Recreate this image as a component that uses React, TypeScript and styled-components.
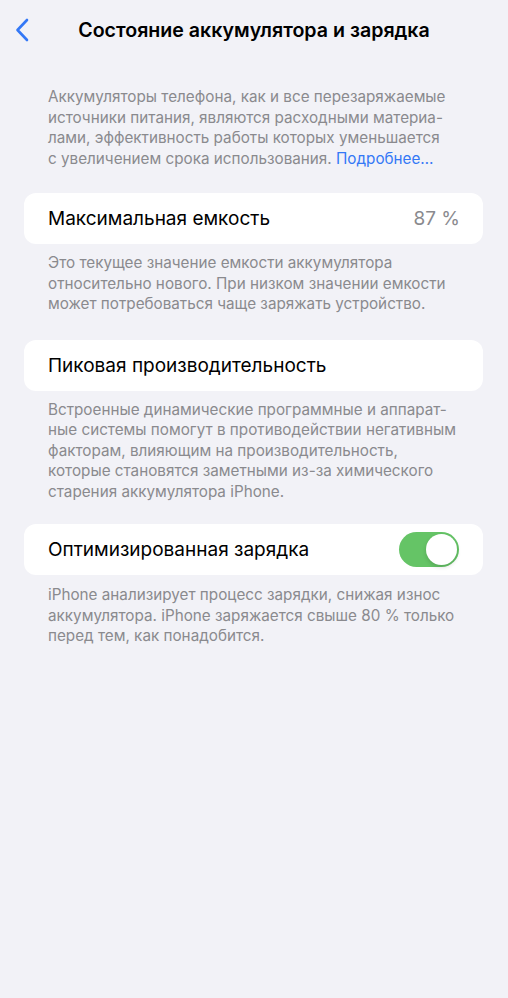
import styled, { createGlobalStyle } from 'styled-components';

const GlobalStyle = createGlobalStyle`
  html, body {
    margin: 0;
    padding: 0;
    background: #f2f2f7;
  }
  body {
    font-family: Inter, "Noto Sans", "Liberation Sans", sans-serif;
    -webkit-font-smoothing: antialiased;
  }
`;

const Screen = styled.div`
  min-height: 998px;
  background: #f2f2f7;
  box-sizing: border-box;
  padding: 0 25px 40px 24px;
`;

const NavBar = styled.div`
  display: grid;
  grid-template-columns: 40px 1fr 40px;
  align-items: center;
  height: 60px;
  margin: 0 -25px 0 -24px;
  padding: 0 8px;
`;

const BackButton = styled.button`
  display: flex;
  align-items: center;
  background: none;
  border: 0;
  padding: 0 0 0 7px;
  height: 40px;
  cursor: pointer;
`;

const Title = styled.h1`
  margin: 0;
  text-align: center;
  font-size: 19.6px;
  font-weight: 600;
  color: #000;
  white-space: nowrap;
`;

const Note = styled.p<{ $top?: number }>`
  margin: ${p => p.$top ?? 9}px 0 0;
  padding: 0 24px;
  font-size: 15.25px;
  line-height: 20.5px;
  color: #8a8a8e;
  white-space: nowrap;
`;

const Link = styled.a`
  color: #3478f6;
  text-decoration: none;
`;

const Card = styled.div<{ $top: number }>`
  display: flex;
  align-items: center;
  justify-content: space-between;
  height: 51px;
  margin-top: ${p => p.$top}px;
  padding: 0 23px 0 24px;
  background: #fff;
  border-radius: 12px;
`;

const Label = styled.span`
  font-size: 19px;
  color: #000;
`;

const Value = styled.span`
  font-size: 19px;
  color: #8a8a8e;
`;

const Toggle = styled.div<{ $on: boolean }>`
  display: flex;
  align-items: center;
  justify-content: ${p => (p.$on ? 'flex-end' : 'flex-start')};
  width: 60px;
  height: 35px;
  margin-right: 1px;
  padding: 2px;
  box-sizing: border-box;
  border-radius: 18px;
  background: ${p => (p.$on ? '#65c466' : '#e9e9ea')};
`;

const Knob = styled.div`
  width: 31px;
  height: 31px;
  border-radius: 50%;
  background: #fff;
  box-shadow: 0 2px 4px rgba(0, 0, 0, 0.15);
`;

export default function App() {
  return (
    <>
      <GlobalStyle />
      <Screen>
        <NavBar>
          <BackButton aria-label="Назад">
            <svg width="14" height="24" viewBox="0 0 14 24" fill="none">
              <path
                d="M12 2L2.5 12L12 22"
                stroke="#3478f6"
                strokeWidth="2.6"
                strokeLinecap="round"
                strokeLinejoin="round"
              />
            </svg>
          </BackButton>
          <Title>Состояние аккумулятора и зарядка</Title>
          <span />
        </NavBar>

        <Note $top={27}>
          Аккумуляторы телефона, как и все перезаряжаемые
          <br />
          источники питания, являются расходными материа-
          <br />
          лами, эффективность работы которых уменьшается
          <br />
          с увеличением срока использования. <Link href="#">Подробнее…</Link>
        </Note>

        <Card $top={24}>
          <Label>Максимальная емкость</Label>
          <Value>87 %</Value>
        </Card>
        <Note>
          Это текущее значение емкости аккумулятора
          <br />
          относительно нового. При низком значении емкости
          <br />
          может потребоваться чаще заряжать устройство.
        </Note>

        <Card $top={25}>
          <Label>Пиковая производительность</Label>
        </Card>
        <Note>
          Встроенные динамические программные и аппарат-
          <br />
          ные системы помогут в противодействии негативным
          <br />
          факторам, влияющим на производительность,
          <br />
          которые становятся заметными из-за химического
          <br />
          старения аккумулятора iPhone.
        </Note>

        <Card $top={22}>
          <Label>Оптимизированная зарядка</Label>
          <Toggle $on>
            <Knob />
          </Toggle>
        </Card>
        <Note $top={10}>
          iPhone анализирует процесс зарядки, снижая износ
          <br />
          аккумулятора. iPhone заряжается свыше 80&nbsp;% только
          <br />
          перед тем, как понадобится.
        </Note>
      </Screen>
    </>
  );
}
